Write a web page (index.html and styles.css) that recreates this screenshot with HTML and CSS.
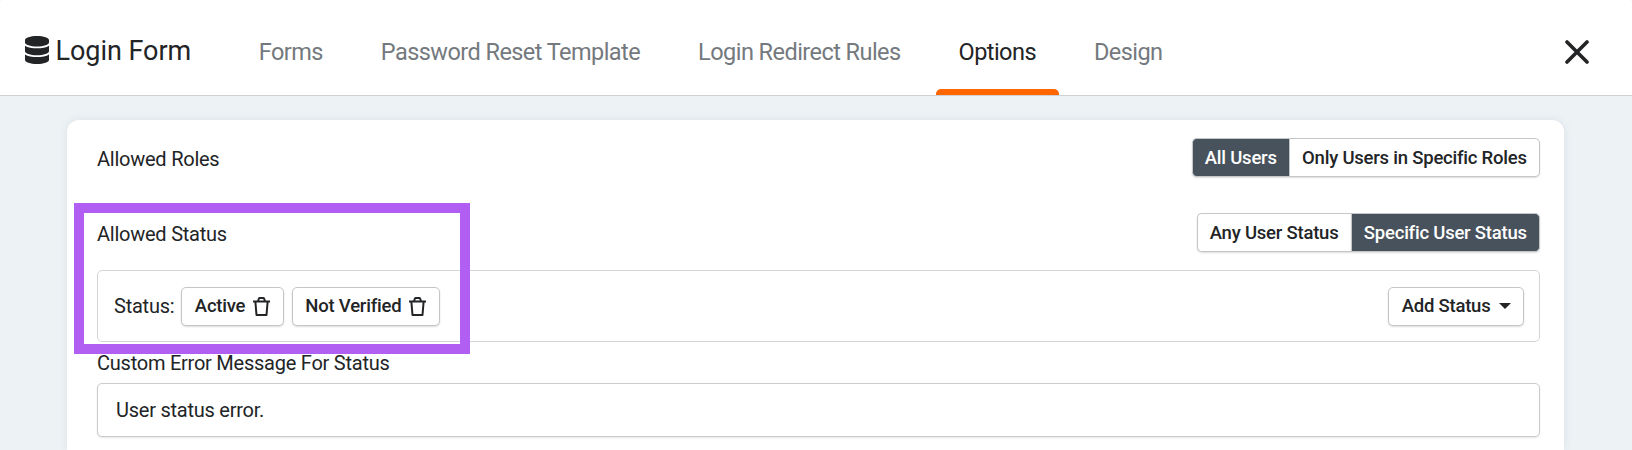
FILE: index.html
```html
<!DOCTYPE html>
<html lang="en">
<head>
    <meta charset="UTF-8">
    <meta name="viewport" content="width=device-width, initial-scale=1.0">
    <title>Login Form</title>
    <link rel="stylesheet" href="styles.css">
</head>
<body>
    <header class="topbar">
        <h1 class="brand">
            <svg class="brand-icon" viewBox="0 0 448 512" preserveAspectRatio="none" fill="currentColor">
                <path d="M448 73v45c0 40-100 73-224 73S0 158 0 118V73C0 33 100 0 224 0s224 33 224 73zM448 176v102c0 40-100 73-224 73S0 318 0 278V176c48 33 136 49 224 49s176-16 224-49zM448 336v103c0 40-100 73-224 73S0 479 0 439V336c48 33 136 49 224 49s176-16 224-49z"/>
            </svg>
            <span>Login Form</span>
        </h1>
        <nav class="tabs">
            <a class="tab">Forms</a>
            <a class="tab">Password Reset Template</a>
            <a class="tab">Login Redirect Rules</a>
            <a class="tab active">Options</a>
            <a class="tab">Design</a>
        </nav>
        <button class="close" aria-label="Close">
            <svg width="24" height="24" viewBox="0 0 24 24" fill="none" stroke="currentColor" stroke-width="3.6" stroke-linecap="round">
                <path d="M2 2l20 20M22 2L2 22"/>
            </svg>
        </button>
    </header>

    <main class="panel">
        <div class="row">
            <span class="label">Allowed Roles</span>
            <div class="btn-group">
                <button class="btn selected">All Users</button>
                <button class="btn">Only Users in Specific Roles</button>
            </div>
        </div>
        <div class="row">
            <span class="label">Allowed Status</span>
            <div class="btn-group">
                <button class="btn">Any User Status</button>
                <button class="btn selected">Specific User Status</button>
            </div>
        </div>

        <div class="status-box">
            <span class="status-label">Status:</span>
            <div class="tags">
                <button class="btn btn-tag">Active
                    <svg class="trash" viewBox="0 0 17 19" fill="none" stroke="currentColor" stroke-width="2" stroke-linejoin="round">
                        <path d="M0 4.5h17M5 4.2l.8-2.4q.3-.8 1-.8h3.4q.7 0 1 .8l.8 2.4M2.4 5l1.1 13h10l1.1-13"/>
                    </svg>
                </button>
                <button class="btn btn-tag">Not Verified
                    <svg class="trash" viewBox="0 0 17 19" fill="none" stroke="currentColor" stroke-width="2" stroke-linejoin="round">
                        <path d="M0 4.5h17M5 4.2l.8-2.4q.3-.8 1-.8h3.4q.7 0 1 .8l.8 2.4M2.4 5l1.1 13h10l1.1-13"/>
                    </svg>
                </button>
            </div>
            <button class="btn btn-add">Add Status <span class="caret"></span></button>
        </div>

        <label class="field-label" for="status-error">Custom Error Message For Status</label>
        <input class="field" id="status-error" type="text" value="User status error.">

        <div class="highlight"></div>
    </main>
</body>
</html>
```

FILE: styles.css
```css
* {
    box-sizing: border-box;
}

body {
    margin: 0;
    background-color: #edf2f5;
    color: #222426;
    font-family: Roboto, sans-serif;
    font-size: 20px;
    letter-spacing: -0.24px;
}

.topbar {
    display: flex;
    height: 96px;
    padding: 0 43px 0 25px;
    background-color: #fff;
    border-bottom: 1px solid #cfd2d4;
    border-radius: 2px 2px 0 0;
}

.brand {
    display: flex;
    align-items: center;
    gap: 6.5px;
    width: 211px;
    margin: 0;
    padding-top: 7px;
    font-size: 27px;
    font-weight: 400;
    letter-spacing: -0.05px;
    white-space: nowrap;
}

.brand-icon {
    width: 24px;
    height: 28px;
    margin-top: -3px;
}

.tabs {
    display: flex;
    gap: 12.6px;
}

.tab {
    position: relative;
    padding: 0 22.7px;
    font-size: 23.5px;
    letter-spacing: -0.55px;
    line-height: 105px;
    color: #74797e;
    white-space: nowrap;
}

.tab.active {
    color: #222426;
}

.tab.active::after {
    content: "";
    position: absolute;
    left: 0;
    right: 0;
    bottom: 0;
    height: 6px;
    background-color: #ff6600;
    border-radius: 5px 5px 0 0;
}

.close {
    display: flex;
    align-items: center;
    margin-left: auto;
    padding: 8px 0 0;
    border: 0;
    background: none;
    color: #222426;
}

.panel {
    position: relative;
    height: 330px;
    margin: 24px 68px 0 67px;
    padding: 0 24px 0 30px;
    background-color: #fff;
    border-radius: 12px 12px 0 0;
    box-shadow: 0 0 8px rgba(60, 80, 100, 0.1);
}

.row {
    display: flex;
    align-items: center;
    justify-content: space-between;
    height: 75px;
}

.label {
    padding-top: 3px;
    white-space: nowrap;
}

.btn {
    display: flex;
    align-items: center;
    height: 39px;
    padding: 0 12.5px;
    border: 1px solid #c3c7ca;
    border-radius: 5px;
    background-color: #fff;
    box-shadow: 0 1px 2px rgba(0, 0, 0, 0.14);
    color: #222426;
    font-family: inherit;
    font-size: 18.5px;
    font-weight: 500;
    letter-spacing: -0.22px;
    white-space: nowrap;
}

.btn-group {
    display: flex;
}

.btn-group .btn {
    padding: 0 12.2px;
}

.btn-group .btn:first-child {
    border-right: 0;
    border-radius: 5px 0 0 5px;
}

.btn-group .btn:last-child {
    border-radius: 0 5px 5px 0;
}

.btn.selected {
    background-color: #48525c;
    color: #fff;
}

.status-box {
    display: flex;
    align-items: center;
    height: 72px;
    padding: 0 15px;
    border: 1px solid #d3d6d8;
    border-radius: 5px;
}

.status-label {
    padding-left: 1px;
}

.tags {
    display: flex;
    gap: 8px;
    margin-left: 7px;
}

.btn-tag {
    gap: 8px;
}

.trash {
    flex: none;
    width: 17px;
    height: 19px;
}

.btn-add {
    gap: 8px;
    margin-left: auto;
}

.caret {
    border: 6px solid transparent;
    border-top-color: currentColor;
    border-bottom: 0;
}

.field-label {
    display: block;
    height: 41px;
    line-height: 43px;
}

.field {
    display: block;
    width: 100%;
    height: 54px;
    padding: 0 18px;
    border: 1px solid #c8ccce;
    border-radius: 5px;
    box-shadow: 0 1px 2px rgba(0, 0, 0, 0.1);
    color: #222426;
    font-family: inherit;
    font-size: inherit;
    letter-spacing: inherit;
}

/* callout around the status section */
.highlight {
    position: absolute;
    left: 7px;
    top: 83px;
    width: 396px;
    height: 151px;
    border: 10px solid #b15ff2;
}
```
